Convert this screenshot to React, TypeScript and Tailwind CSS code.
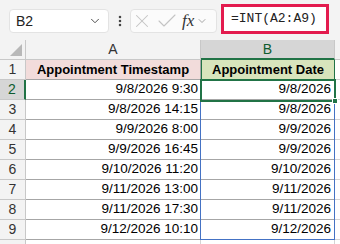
import { Check, ChevronDown, EllipsisVertical, X } from "lucide-react";

const rows = [
  ["9/8/2026 9:30", "9/8/2026"],
  ["9/8/2026 14:15", "9/8/2026"],
  ["9/9/2026 8:00", "9/9/2026"],
  ["9/9/2026 16:45", "9/9/2026"],
  ["9/10/2026 11:20", "9/10/2026"],
  ["9/11/2026 13:00", "9/11/2026"],
  ["9/11/2026 17:30", "9/11/2026"],
  ["9/12/2026 10:10", "9/12/2026"],
];

function Toolbar() {
  return (
    <div className="flex h-[40px] items-start bg-[#f3f3f3] pl-[9px]">
      <div className="mt-[9px] flex h-[24px] w-[100px] items-center justify-between rounded-[4px] border border-[#e3e3e3] bg-white pl-[6px] pr-[6px]">
        <span className="text-[14px] text-[#222]">B2</span>
        <ChevronDown size={14} strokeWidth={1.6} className="text-[#444]" />
      </div>
      <div className="ml-[4px] mt-[14px] flex w-[14px] justify-center">
        <EllipsisVertical size={14} strokeWidth={2.4} className="text-[#444]" />
      </div>
      <div className="ml-[3px] mt-[9px] flex h-[24px] w-[87px] items-center rounded-[4px] border border-[#e3e3e3] bg-[#fbfbfb]">
        <X size={22} strokeWidth={1.1} className="text-[#c4c4c4]" />
        <Check size={24} strokeWidth={1.1} className="ml-[2px] text-[#c4c4c4]" />
        <span className="ml-[3px] font-['Liberation_Serif',serif] text-[17px] italic text-[#333]">
          fx
        </span>
        <ChevronDown size={12} strokeWidth={1.5} className="ml-[2px] text-[#888]" />
      </div>
      <div className="ml-[4px] mt-[4px] flex h-[30px] w-[108px] items-center border-[3px] border-[#e31b4e] bg-white pl-[7px]">
        <span className="font-['Liberation_Mono',monospace] text-[13px] text-[#222]">
          =INT(A2:A9)
        </span>
      </div>
    </div>
  );
}

function Sheet() {
  return (
    <div className="relative grid grid-cols-[26px_175px_134px_5px] grid-rows-[20px_repeat(9,20px)_4px] bg-white">
      {/* header row */}
      <div className="relative border-b border-r border-[#c8c8c8] bg-[#f3f3f3]">
        <div className="absolute bottom-[3px] right-[3px] h-0 w-0 border-b-[12px] border-l-[12px] border-b-[#b8b8b8] border-l-transparent" />
      </div>
      <div className="flex items-center justify-center border-b border-r border-[#c8c8c8] bg-[#f3f3f3] text-[14px] text-[#333]">
        A
      </div>
      <div className="flex items-center justify-center border-b-2 border-r border-b-[#217346] border-r-[#c8c8c8] bg-[#d6d6d6] text-[14px] text-[#0e5c2f]">
        B
      </div>
      <div className="border-b border-[#c8c8c8] bg-[#f3f3f3]" />

      {/* row 1 */}
      <div className="flex items-center justify-center border-b border-r border-[#c8c8c8] bg-[#f3f3f3] text-[14px] text-[#333]">
        1
      </div>
      <div className="flex items-center justify-center border-b border-r border-[#a6a6a6] bg-[#f2dcdb] text-[13px] font-bold text-black">
        Appointment Timestamp
      </div>
      <div className="flex items-center justify-center border-b border-[#a6a6a6] border-l border-l-[#217346] border-r border-r-[#217346] bg-[#d8e4bc] text-[13px] font-bold text-black">
        Appointment Date
      </div>
      <div className="border-b border-[#d4d4d4]" />

      {rows.map(([a, b], i) => {
        const active = i === 0;
        return (
          <div key={i} className="contents">
            <div
              className={
                active
                  ? "flex items-center justify-center border-b border-r-2 border-b-[#c8c8c8] border-r-[#217346] bg-[#d6d6d6] text-[14px] text-[#0e5c2f]"
                  : "flex items-center justify-center border-b border-r border-[#c8c8c8] bg-[#f3f3f3] text-[14px] text-[#333]"
              }
            >
              {i + 2}
            </div>
            <div className="flex items-center justify-end border-b border-r border-[#a6a6a6] pr-[2px] text-[13.5px] text-black">
              {a}
            </div>
            <div className="flex items-center justify-end border-b border-r border-[#a6a6a6] pr-[3px] text-[13.5px] text-black">
              {b}
            </div>
            <div className="border-b border-[#d4d4d4]" />
          </div>
        );
      })}

      {/* partial row 10 */}
      <div className="border-r border-[#c8c8c8] bg-[#f3f3f3]" />
      <div className="border-r border-[#d4d4d4]" />
      <div className="border-r border-[#d4d4d4]" />
      <div />

      {/* spill range B2:B9 */}
      <div className="pointer-events-none absolute left-[200px] top-[40px] h-[160px] w-[135px] border border-[#4472c4]" />
      {/* active cell B2 */}
      <div className="pointer-events-none absolute left-[200px] top-[39px] h-[23px] w-[136px] border-2 border-[#217346]" />
      <div className="pointer-events-none absolute left-[332px] top-[58px] h-[6px] w-[6px] border border-white bg-[#217346]" />
    </div>
  );
}

export default function App() {
  return (
    <div className="h-[244px] w-[340px] overflow-hidden bg-[#f3f3f3] font-['Liberation_Sans',Arial,sans-serif]">
      <Toolbar />
      <Sheet />
    </div>
  );
}
